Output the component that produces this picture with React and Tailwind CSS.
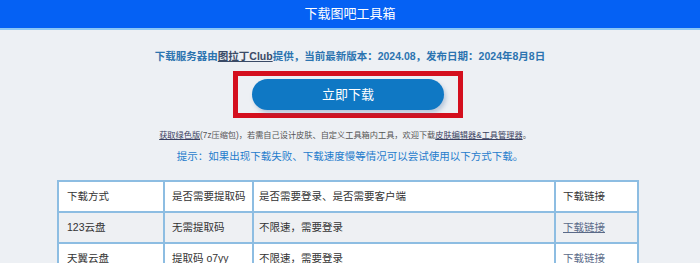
import React from 'react';

const rows = [
  { way: '下载方式', code: '是否需要提取码', note: '是否需要登录、是否需要客户端', link: '下载链接', isHead: true },
  { way: '123云盘', code: '无需提取码', note: '不限速，需要登录', link: '下载链接', grey: true },
  { way: '天翼云盘', code: '提取码 o7yy', note: '不限速，需要登录', link: '下载链接' },
];

const App = () => {
  return (
    <div
      className="w-[700px] h-[263px] overflow-hidden bg-[#edf0f4]"
      style={{ fontFamily: '"Liberation Sans", "Noto Sans CJK SC", sans-serif' }}
    >
      <div className="h-[30px] bg-[#0561f4] border-b-2 border-[#8cc7f5] flex items-center justify-center text-white text-[13px]">
        下载图吧工具箱
      </div>

      <p className="mt-[18px] text-center text-[10.5px] font-bold text-[#2c74b0] leading-[16px]">
        下载服务器由<span className="underline text-[#3a4a66]">图拉丁Club</span>提供，当前最新版本：2024.08，发布日期：2024年8月8日
      </p>

      <div className="flex justify-center mt-[7px] -translate-x-[2px]">
        <div className="w-[230px] h-[47px] border-[5px] border-[#d40f1e] flex items-center justify-center">
          <button className="w-[192px] h-[31px] rounded-full bg-[#0f78c4] text-white text-[13px] shadow-[2px_3px_4px_rgba(80,120,170,0.35)]">
            立即下载
          </button>
        </div>
      </div>

      <p className="mt-[12px] text-center text-[8.2px] text-[#555] leading-[12px] -translate-x-[5px]">
        <span className="underline text-[#3a4060]">获取绿色版</span>(7z压缩包)，若需自己设计皮肤、自定义工具箱内工具，欢迎下载<span className="underline text-[#3a4060]">皮肤编辑器&amp;工具管理器</span>。
      </p>
      <p className="mt-[6px] text-center text-[10.5px] text-[#1f7ccc] leading-[16px]">
        提示：如果出现下载失败、下载速度慢等情况可以尝试使用以下方式下载。
      </p>

      <table className="mt-[16px] ml-[57px] w-[580px] table-fixed border-collapse border-2 border-[#8dbde2] text-[10.5px] text-[#333]">
        <colgroup>
          <col className="w-[106px]" />
          <col className="w-[89px]" />
          <col className="w-[302px]" />
          <col className="w-[83px]" />
        </colgroup>
        <tbody>
          {rows.map((r, i) => (
            <tr key={i} className={r.grey ? 'bg-[#eef0f3]' : 'bg-white'}>
              <td className="h-[31px] px-[8px] whitespace-nowrap border-2 border-[#8dbde2]">{r.way}</td>
              <td className="px-[7px] whitespace-nowrap border-2 border-[#8dbde2]">{r.code}</td>
              <td className="px-[5px] whitespace-nowrap border-2 border-[#8dbde2]">{r.note}</td>
              <td className="px-[7px] whitespace-nowrap border-2 border-[#8dbde2]">
                {r.isHead ? r.link : <span className="underline text-[#5a6a88]">{r.link}</span>}
              </td>
            </tr>
          ))}
        </tbody>
      </table>
    </div>
  );
};

export default App;
